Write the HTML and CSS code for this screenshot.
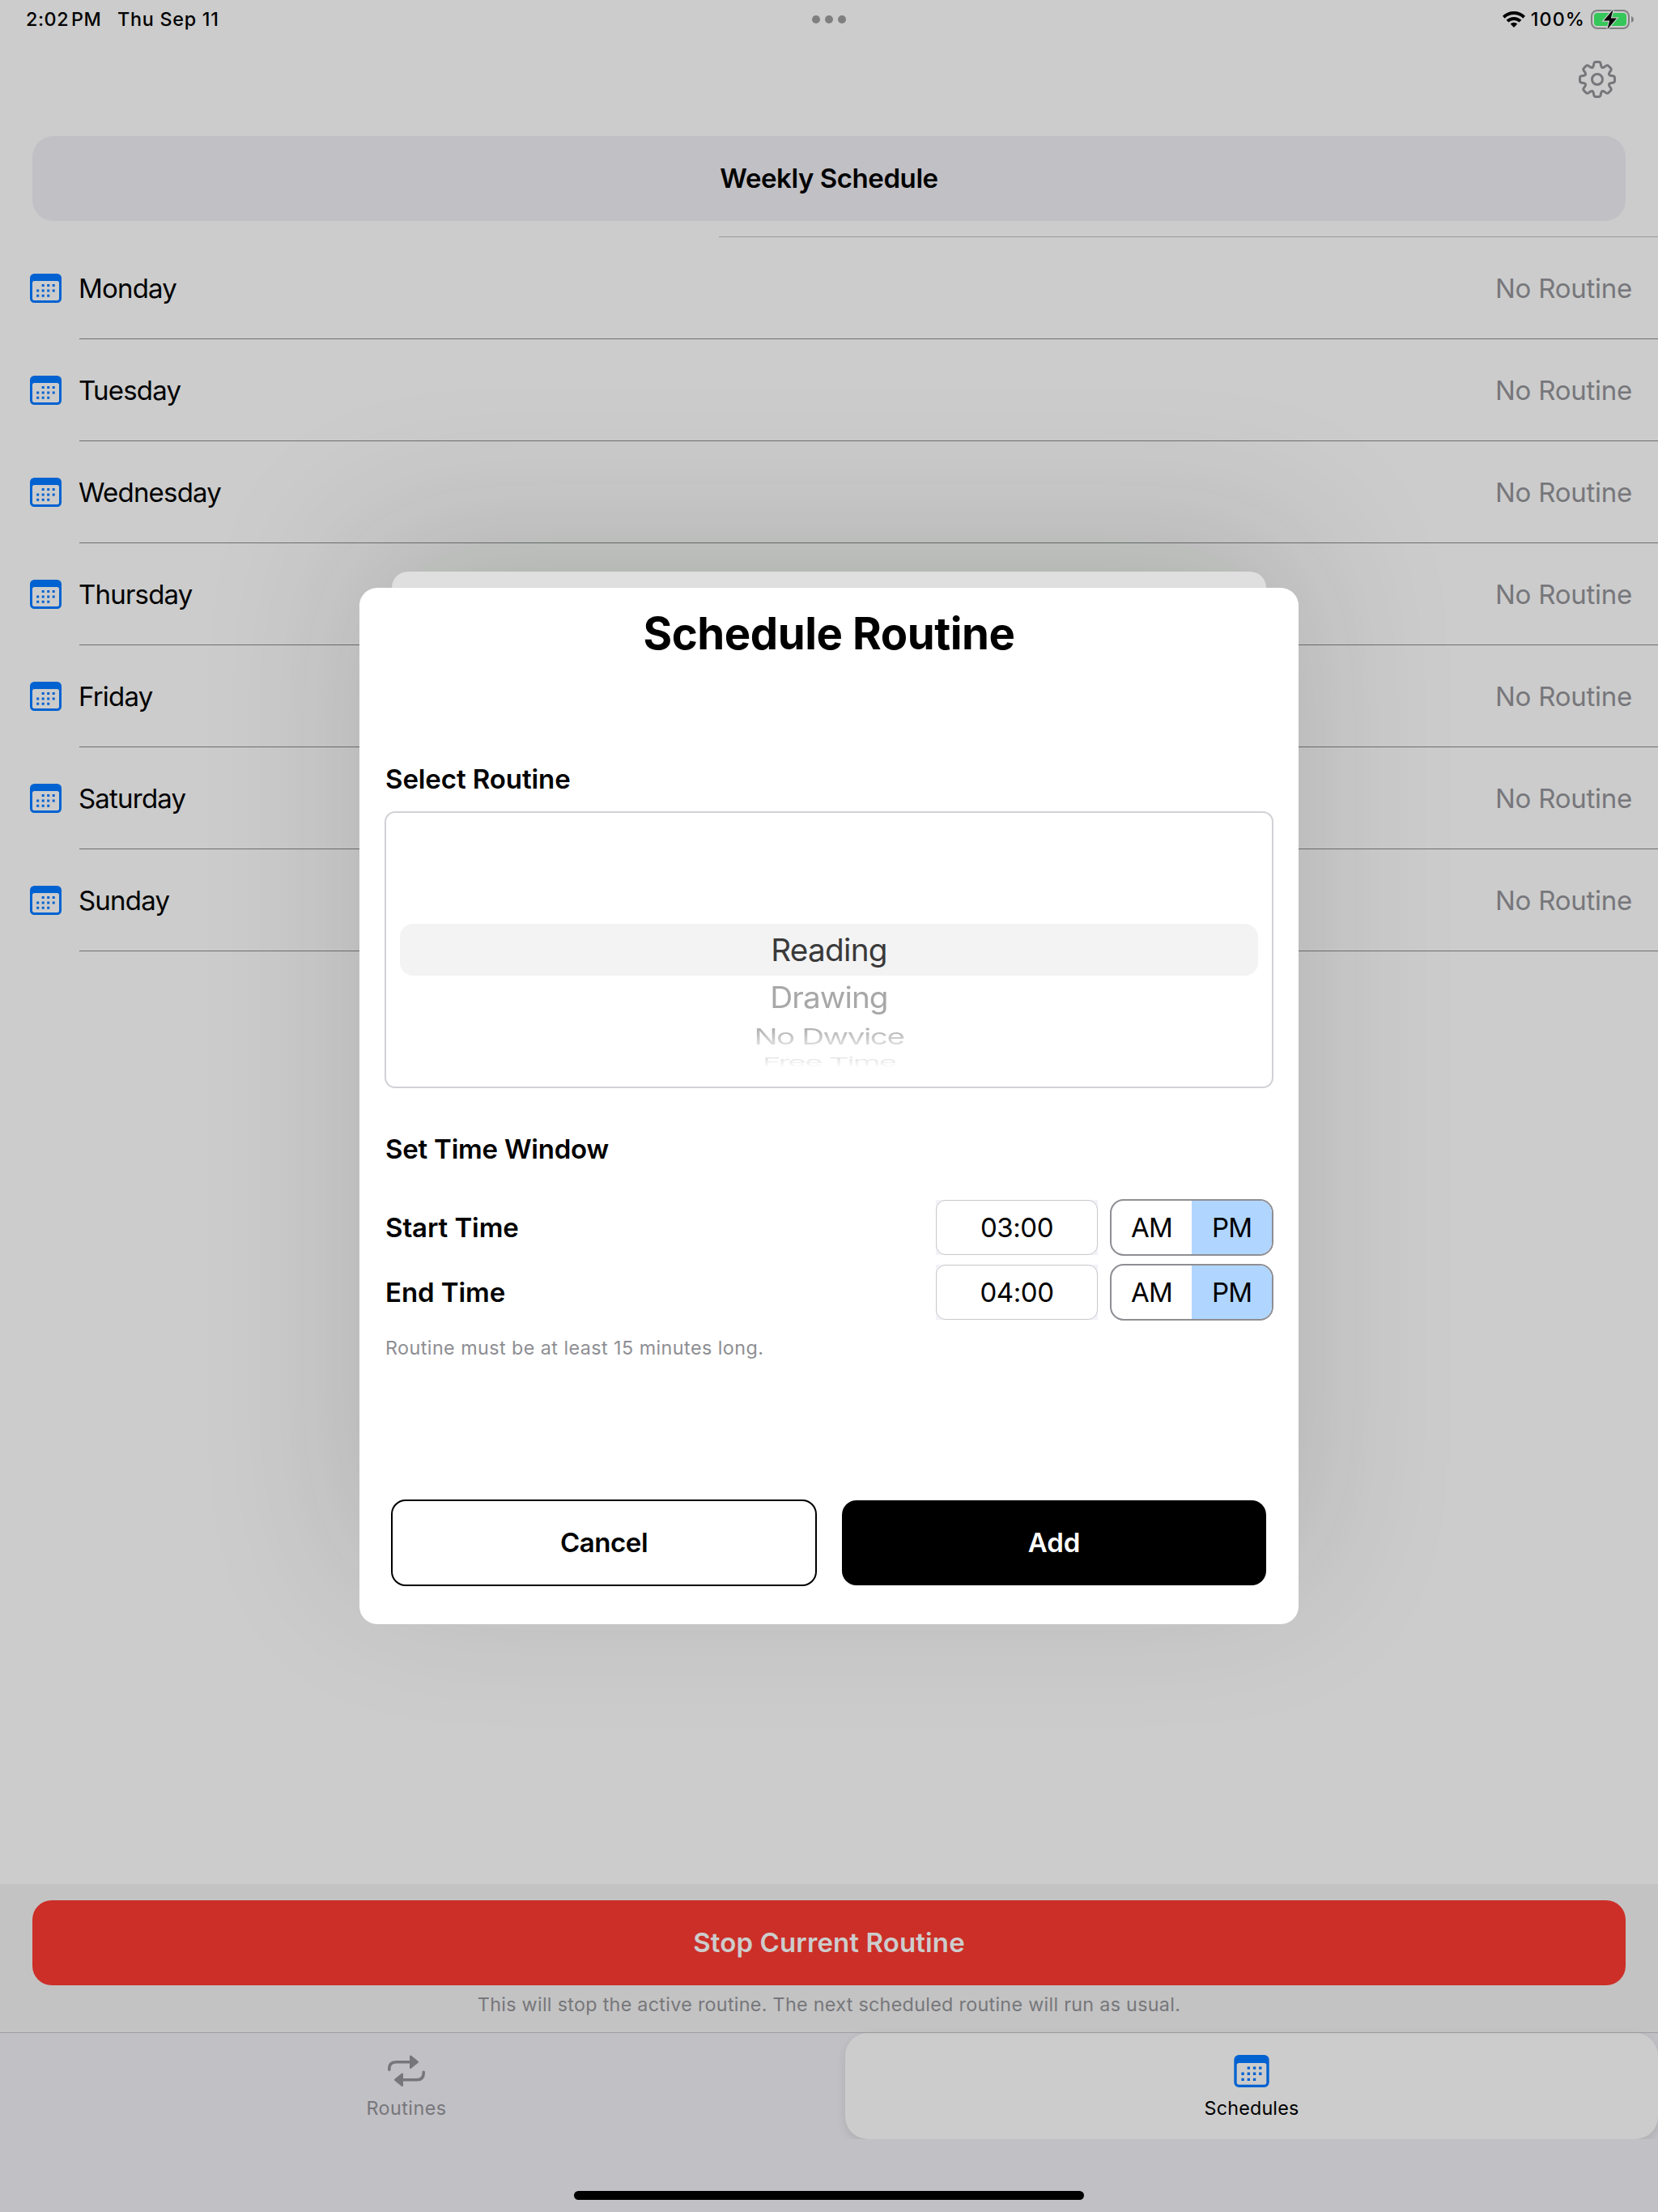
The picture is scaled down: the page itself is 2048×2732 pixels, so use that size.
FILE: index.html
```html
<!DOCTYPE html>
<html lang="en">
<head>
<meta charset="utf-8">
<title>Weekly Schedule</title>
<link rel="stylesheet" href="styles.css">
</head>
<body>
<svg class="defs" width="0" height="0" aria-hidden="true">
  <symbol id="calendar" viewBox="0 0 39 36">
    <path fill-rule="evenodd" d="M5.500 0h28a5.500 5.500 0 0 1 5.500 5.500v25a5.500 5.500 0 0 1-5.500 5.500h-28A5.500 5.500 0 0 1 0 30.500v-25A5.500 5.500 0 0 1 5.500 0zM5.500 9A2.500 2.500 0 0 0 3 11.500v19A2.500 2.500 0 0 0 5.500 33h28a2.500 2.500 0 0 0 2.500-2.500v-19A2.500 2.500 0 0 0 33.500 9z"/>
    <path d="M14.700 13h3v3h-3zM21.200 13h3v3h-3zM27.700 13h3v3h-3zM8.200 19.400h3v3h-3zM14.700 19.400h3v3h-3zM21.200 19.400h3v3h-3zM27.700 19.400h3v3h-3zM8.200 25.800h3v3h-3zM14.700 25.800h3v3h-3zM21.200 25.800h3v3h-3z"/>
  </symbol>
  <symbol id="tooth" viewBox="-24 -24 48 48">
    <path d="M-6.050-14.600Q-4.900-15.300-4.600-17L-4.200-19.300Q-3.800-21.500-1.800-21.500H1.800Q3.800-21.500 4.200-19.300L4.600-17Q4.900-15.300 6.050-14.600"/>
  </symbol>
</svg>

<div class="screen">
  <header class="status">
    <div class="status-side">
      <span class="st-time">2:02 PM</span>
      <span class="st-date">Thu Sep 11</span>
    </div>
    <div class="dots"><i></i><i></i><i></i></div>
    <div class="status-side status-right">
      <svg class="wifi" viewBox="0 0 28 20">
        <g fill="none" stroke="#000" stroke-width="4">
          <path d="M1.300 7.200a18.200 18.200 0 0 1 25.400 0"/>
          <path d="M6 12.200a11.400 11.400 0 0 1 16 0"/>
        </g>
        <path d="M14 20l-4.300-4.400a6.200 6.200 0 0 1 8.600 0z"/>
      </svg>
      <span class="st-batt">100%</span>
      <svg class="battery" viewBox="0 0 53 24">
        <rect x="1" y="1" width="46" height="22" rx="7" fill="none" stroke="#808083" stroke-width="2"/>
        <rect x="4" y="4" width="40" height="16" rx="4" fill="#35c759"/>
        <path d="M50 8c4 1.500 4 6.500 0 8z" fill="#808083"/>
        <path d="M27.500 0L16 13.600h7.200L20.500 24 32 10.400h-7.200z" stroke="#ccc" stroke-width="2.400" paint-order="stroke"/>
      </svg>
    </div>
  </header>

  <div class="toolbar">
    <svg class="gear" viewBox="-24 -24 48 48" fill="none" stroke="#77777b" stroke-width="3" stroke-linecap="round" stroke-linejoin="round">
      <use href="#tooth" x="-24" y="-24" width="48" height="48"/>
      <use href="#tooth" x="-24" y="-24" width="48" height="48" transform="rotate(45)"/>
      <use href="#tooth" x="-24" y="-24" width="48" height="48" transform="rotate(90)"/>
      <use href="#tooth" x="-24" y="-24" width="48" height="48" transform="rotate(135)"/>
      <use href="#tooth" x="-24" y="-24" width="48" height="48" transform="rotate(180)"/>
      <use href="#tooth" x="-24" y="-24" width="48" height="48" transform="rotate(225)"/>
      <use href="#tooth" x="-24" y="-24" width="48" height="48" transform="rotate(270)"/>
      <use href="#tooth" x="-24" y="-24" width="48" height="48" transform="rotate(315)"/>
      <circle r="6.500"/>
    </svg>
  </div>

  <h1 class="banner">Weekly Schedule</h1>

  <ul class="days">
    <li><svg class="cal"><use href="#calendar"/></svg><div class="day"><span>Monday</span><span class="none">No Routine</span></div></li>
    <li><svg class="cal"><use href="#calendar"/></svg><div class="day"><span>Tuesday</span><span class="none">No Routine</span></div></li>
    <li><svg class="cal"><use href="#calendar"/></svg><div class="day"><span>Wednesday</span><span class="none">No Routine</span></div></li>
    <li><svg class="cal"><use href="#calendar"/></svg><div class="day"><span>Thursday</span><span class="none">No Routine</span></div></li>
    <li><svg class="cal"><use href="#calendar"/></svg><div class="day"><span>Friday</span><span class="none">No Routine</span></div></li>
    <li><svg class="cal"><use href="#calendar"/></svg><div class="day"><span>Saturday</span><span class="none">No Routine</span></div></li>
    <li><svg class="cal"><use href="#calendar"/></svg><div class="day"><span>Sunday</span><span class="none">No Routine</span></div></li>
  </ul>

  <section class="stop">
    <button class="stop-btn">Stop Current Routine</button>
    <p class="stop-note">This will stop the active routine. The next scheduled routine will run as usual.</p>
  </section>

  <nav class="tabs">
    <a class="tab">
      <svg class="repeat" viewBox="0 0 46 39">
        <g fill="#77777b" stroke="#77777b" stroke-linejoin="round" stroke-linecap="round">
          <path d="M1.800 17.800V16.500Q1.800 8.200 10.200 8.200H28" fill="none" stroke-width="3.600"/>
          <path d="M28.200 1.200V15.200L36.800 8.200z" stroke-width="2.400"/>
          <path d="M44.200 20.700V22Q44.200 30.300 35.800 30.300H18" fill="none" stroke-width="3.600"/>
          <path d="M17.800 37.300V23.300L9.200 30.300z" stroke-width="2.400"/>
        </g>
      </svg>
      <span class="routines">Routines</span>
    </a>
    <a class="tab active">
      <svg class="cal"><use href="#calendar"/></svg>
      <span>Schedules</span>
    </a>
  </nav>
  <div class="home"></div>
</div>

<div class="modal">
  <div class="sheet-back"></div>
  <main class="sheet">
    <h2 class="title">Schedule Routine</h2>
    <h3 class="label select">Select Routine</h3>
    <div class="picker">
      <div class="opt chosen"><span>Reading</span></div>
      <div class="opt second"><span>Drawing</span></div>
      <div class="opt third"><span>No Dwvice</span></div>
      <div class="opt fourth"><span>Free Time</span></div>
    </div>
    <h3 class="label window">Set Time Window</h3>
    <div class="times">
      <div class="time-row">
        <span class="label">Start Time</span>
        <div class="field"><span>03:00</span></div>
        <div class="seg"><span>AM</span><span class="on">PM</span></div>
      </div>
      <div class="time-row">
        <span class="label">End Time</span>
        <div class="field"><span>04:00</span></div>
        <div class="seg"><span>AM</span><span class="on">PM</span></div>
      </div>
    </div>
    <p class="note">Routine must be at least 15 minutes long.</p>
    <div class="actions">
      <button class="cancel">Cancel</button>
      <button class="add">Add</button>
    </div>
  </main>
</div>
</body>
</html>
```
FILE: styles.css
```css
* { box-sizing: border-box; margin: 0; padding: 0; }
body {
  width: 2048px; height: 2732px; position: relative; overflow: hidden;
  background: #ccc; color: #000;
  font: 400 33px/40px Inter, "Liberation Sans", sans-serif;
}
.defs { position: absolute; }
button { font: inherit; color: inherit; border: 0; background: none; }
.screen { height: 2732px; display: flex; flex-direction: column; }

/* Status bar */
.status {
  height: 48px; padding: 0 30px 0 32px;
  display: grid; grid-template-columns: 1fr auto 1fr; align-items: center;
  font-size: 23.3px; font-weight: 500; line-height: 48px;
}
.status-side { display: flex; align-items: center; }
.status-side > span { white-space: nowrap; }
.st-time { letter-spacing: .6px; word-spacing: -4px; }
.st-date { margin-left: 19.5px; letter-spacing: .76px; }
.status-right { justify-content: flex-end; }
.dots { display: flex; gap: 6px; margin-right: 2px; }
.dots i { width: 10px; height: 10px; border-radius: 50%; background: #7f7f7f; }
.wifi { width: 28px; height: 20px; margin-right: 7px; }
.st-batt { margin-right: 7px; letter-spacing: 1.080px; }
.battery { width: 53px; height: 24px; overflow: visible; }

.toolbar { height: 120px; padding: 26px 51px 0 0; display: flex; justify-content: flex-end; }
.gear { width: 48px; height: 48px; }

.banner {
  height: 105px; margin: 0 40px; border-radius: 26px; background: #c1c0c5;
  font-size: 33px; font-weight: 600; line-height: 105px; text-align: center; letter-spacing: -.43px;
}

/* Day list */
.days {
  list-style: none; margin-top: 19px; padding: 1px 0 0 37px;
  background: linear-gradient(#9b9b9d, #9b9b9d) 888px 0 / 1160px 1px no-repeat;
}
.days li { display: flex; align-items: center; }
.cal { width: 39px; height: 36px; fill: #0062d1; flex: none; }
.day {
  flex: 1; height: 126px; margin-left: 22px; padding-right: 32px;
  display: flex; justify-content: space-between; align-items: center;
  border-bottom: 1px solid #6f6f70; letter-spacing: -.8px; text-indent: -1px;
}
.none { color: #77777b; letter-spacing: -.25px; }

/* Stop bar */
.stop { margin-top: auto; height: 183px; padding: 20px 40px 0; background: #c3c3c3; text-align: center; }
.stop-btn {
  display: block; width: 100%; height: 105px; padding-bottom: 2px; border-radius: 24px;
  background: #cc2f27; color: #ccc; font-weight: 600; letter-spacing: .12px;
}
.stop-note { margin-top: 8px; font-size: 23.3px; line-height: 32px; color: #77777b; letter-spacing: .3px; }

/* Tab bar */
.tabs { display: grid; grid-template-columns: 1004px 1004px; gap: 40px; height: 132px; border-top: 1px solid #9f9fa2; background: #c1c0c5; }
.tab { display: flex; flex-direction: column; align-items: center; padding-top: 27px; font-size: 23.3px; line-height: 32px; color: #77777b; letter-spacing: .2px; }
.tab .cal { width: 44px; height: 40px; }
.repeat { width: 46px; height: 40px; }
.tab span { margin-top: 10px; }
.tab .routines { letter-spacing: .47px; }
.tab.active { background: #ccc; color: #000; border-radius: 28px; box-shadow: 0 4px 12px rgba(0,0,0,.1); }
.home { height: 90px; background: #c1c0c5; padding-top: 64px; }
.home::before { content: ""; display: block; width: 630px; height: 11px; margin: 0 auto; border-radius: 6px; background: #000; }

/* Modal sheet */
.modal {
  position: absolute; left: 444px; top: 726px; width: 1160px; height: 1280px;
  border-radius: 22px; box-shadow: 0 -60px 200px rgba(10,30,0,.15);
}
.sheet-back {
  position: absolute; left: 40px; top: -20px; width: 1080px; height: 60px;
  border-radius: 20px; background: #dfdfdf;
}
.sheet { position: relative; height: 1280px; padding: 22px 31px 0; border-radius: 22px; background: #fff; }
.title { font-size: 54.5px; font-weight: 700; line-height: 68px; text-align: center; letter-spacing: -.45px; }
.label { font-size: 33px; font-weight: 600; line-height: 40px; padding-left: 1px; letter-spacing: -.08px; }
.select { margin-top: 126px; }
.picker { height: 342px; margin-top: 20px; padding: 137px 17px 0; border: 2px solid #d1d1d6; border-radius: 13px; font-size: 38.7px; text-align: center; }
.opt span { display: inline-block; }
.chosen { height: 64px; line-height: 64px; border-radius: 16px; background: #f3f3f4; color: #3a3a3a; letter-spacing: -.7px; }
.second { height: 53px; line-height: 54px; color: #a8a8a8; letter-spacing: -.92px; }
.second span { transform: scaleY(.95); }
.third { height: 44px; line-height: 44px; letter-spacing: -1.5px; }
.third span { transform: scaleY(.69); color: transparent; background: linear-gradient(#b4b4b4 25%, #d8d8d8 75%); -webkit-background-clip: text; background-clip: text; }
.fourth { height: 21px; line-height: 21px; letter-spacing: -1.980px; }
.fourth span { line-height: 44px; margin-top: -12px; transform: scaleY(.39); color: transparent; background: linear-gradient(#e2e2e2 20%, #fbfbfb 80%); -webkit-background-clip: text; background-clip: text; }
.window { margin-top: 55px; letter-spacing: -.22px; }
.times { margin-top: 42px; display: flex; flex-direction: column; gap: 10px; }
.time-row { height: 70px; display: flex; align-items: center; }
.field { width: 200px; height: 68px; margin-left: auto; background: #f2f2f7; letter-spacing: -.43px; }
.field span { display: block; height: 68px; line-height: 66px; border: 1px solid #c8c8ca; border-radius: 12px; background: #fff; text-align: center; }
.seg { width: 202px; height: 70px; margin-left: 15px; display: flex; border: 2px solid #8e8e93; border-radius: 17px; overflow: hidden; letter-spacing: -.9px; }
.seg span { flex: 1; line-height: 66px; text-align: center; }
.seg .on { background: #b0d6ff; }
.note { margin-top: 18px; padding-left: 1px; font-size: 23.3px; line-height: 31px; color: #8e8e93; letter-spacing: .45px; }
.actions { margin-top: 172px; padding: 0 9px 0 8px; display: flex; gap: 31px; align-items: center; font-weight: 600; }
.cancel { width: 526px; height: 107px; padding-bottom: 2px; border: 2px solid #000; border-radius: 18px; letter-spacing: -.44px; }
.add { width: 524px; height: 105px; padding-bottom: 2px; border-radius: 18px; background: #000; color: #fff; }
```
